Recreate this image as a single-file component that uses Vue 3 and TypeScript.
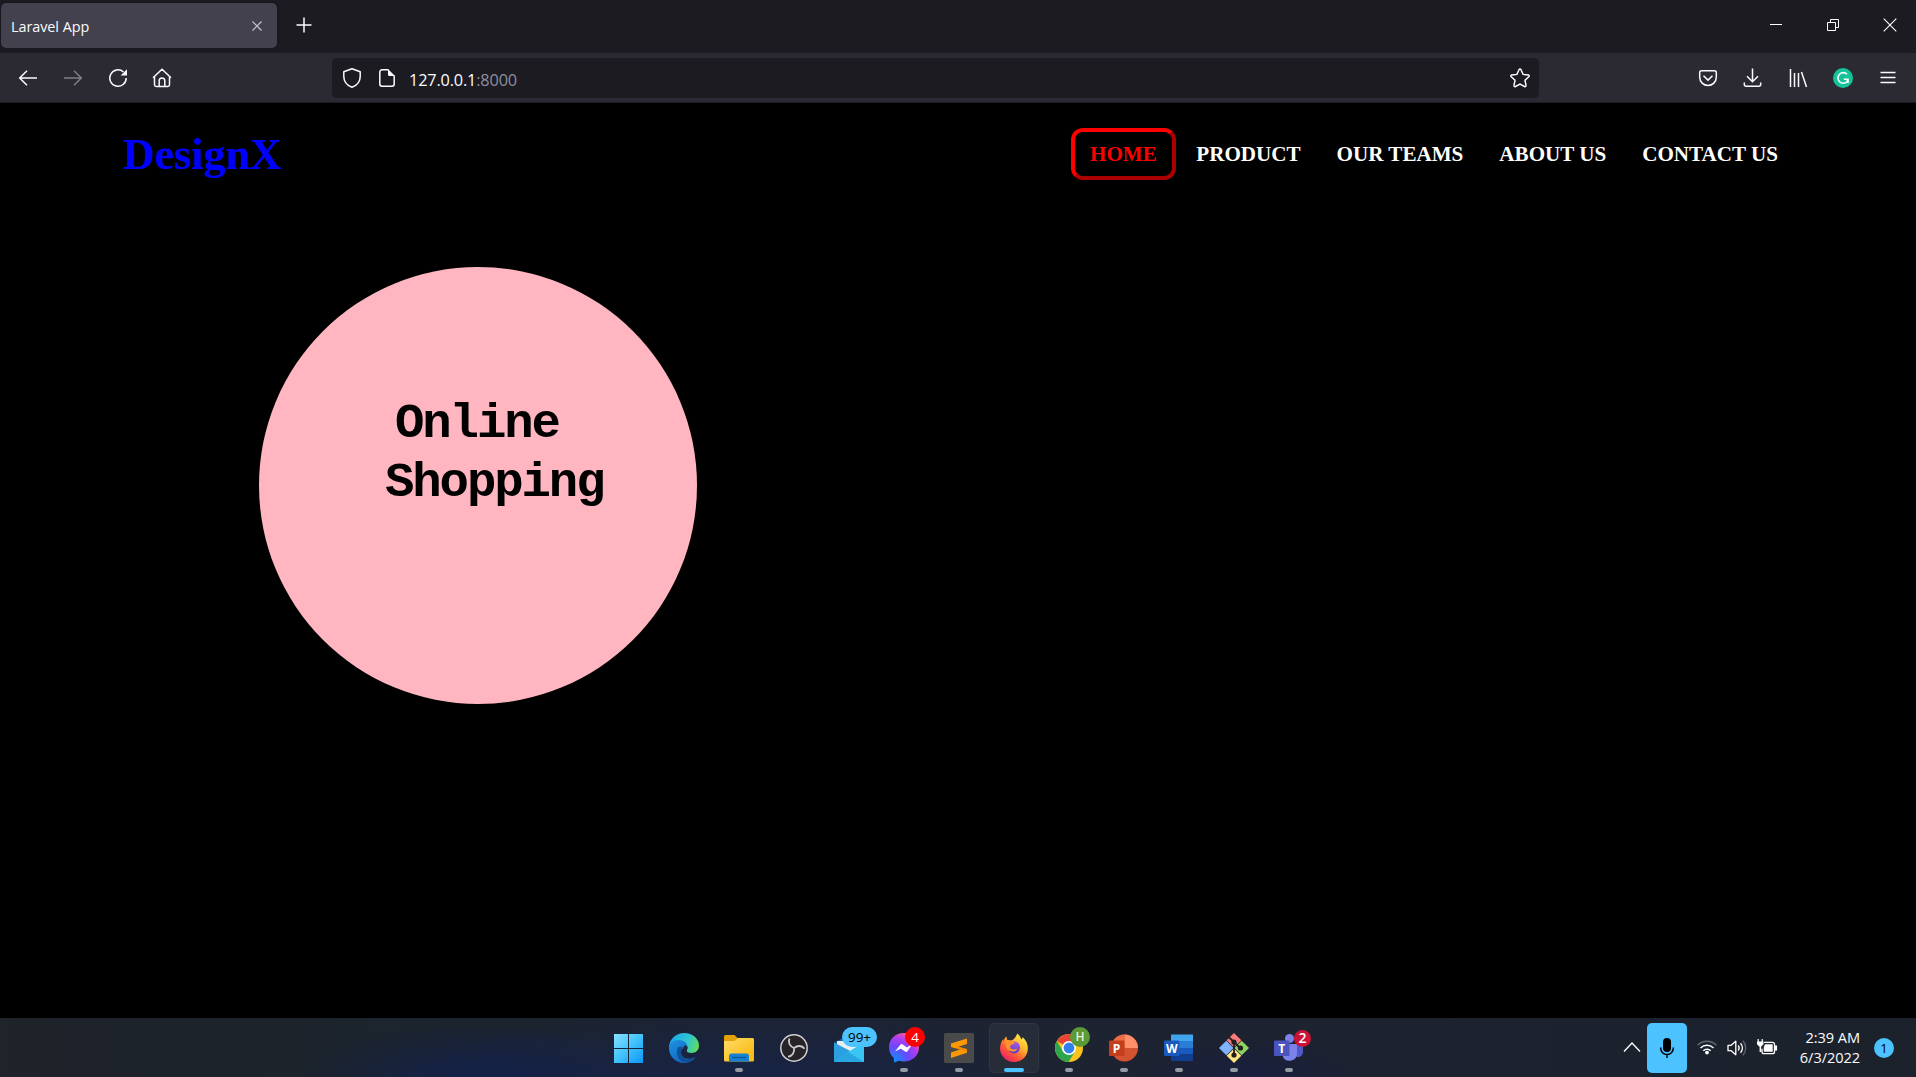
<script setup lang="ts">
interface NavItem { label: string; active?: boolean }
interface TaskApp { id: string; running?: boolean; active?: boolean; badge?: string; badgeKind?: string }

const nav: NavItem[] = [
  { label: 'HOME', active: true },
  { label: 'PRODUCT' },
  { label: 'OUR TEAMS' },
  { label: 'ABOUT US' },
  { label: 'CONTACT US' },
]

const apps: TaskApp[] = [
  { id: 'start' },
  { id: 'edge' },
  { id: 'files', running: true },
  { id: 'obs' },
  { id: 'mail', badge: '99+', badgeKind: 'pill' },
  { id: 'messenger', running: true, badge: '4', badgeKind: 'red' },
  { id: 'sublime', running: true },
  { id: 'firefox', active: true },
  { id: 'chrome', running: true, badge: 'H', badgeKind: 'green' },
  { id: 'powerpoint', running: true },
  { id: 'word', running: true },
  { id: 'git', running: true },
  { id: 'teams', running: true, badge: '2', badgeKind: 'crimson' },
]
</script>

<template>
  <div class="screen">
    <header class="tabbar">
      <div class="tab">
        <span class="tab-title">Laravel App</span>
        <svg class="tab-close" width="12" height="12" viewBox="0 0 12 12"><path d="M1.500 1.500l9 9M10.500 1.500l-9 9" stroke="#c9c8d0" stroke-width="1.200" fill="none" /></svg>
      </div>
      <svg class="new-tab" width="16" height="16" viewBox="0 0 16 16"><path d="M8 .5v15M.5 8h15" stroke="#fbfbfe" stroke-width="1.500" /></svg>
      <div class="window-controls">
        <svg width="14" height="14" viewBox="0 0 14 14"><path d="M1 6.500h12" stroke="#fff" /></svg>
        <svg width="14" height="14" viewBox="0 0 14 14" fill="none" stroke="#fff"><path d="M1.500 4.500h8v8h-8zM4.500 4.500v-3h8v8h-3" /></svg>
        <svg width="14" height="14" viewBox="0 0 14 14"><path d="M.7 .7l12.600 12.600M13.300 .7L.7 13.300" stroke="#fff" stroke-width="1.100" /></svg>
      </div>
    </header>

    <div class="toolbar">
      <div class="tools">
        <svg width="20" height="20" viewBox="0 0 20 20" class="ico"><path d="M19 10H2M9 2.700L1.700 10 9 17.300" /></svg>
        <svg width="20" height="20" viewBox="0 0 20 20" class="ico dim"><path d="M1 10h17M11 2.700l7.300 7.300-7.300 7.300" /></svg>
        <svg width="20" height="20" viewBox="0 0 20 20" class="ico"><path d="M18.200 10A8.200 8.200 0 1 1 15.500 4" /><path d="M19 1.200v6.300h-6.300z" fill="#fbfbfe" stroke="none" /></svg>
        <svg width="20" height="20" viewBox="0 0 20 20" class="ico home"><path d="M1 9.800L10 1.200l9 8.600M2.500 8.800v8a1.700 1.700 0 0 0 1.700 1.700h11.600a1.700 1.700 0 0 0 1.700-1.700v-8M7.200 18.300v-5.500a2.800 2.800 0 0 1 5.600 0v5.500" /></svg>
      </div>
      <div class="urlbar">
        <svg class="ico" width="20" height="22" viewBox="0 0 20 22"><path d="M10 1.800l8.200 3v4.700c0 5-3.600 9-8.200 10.800C5.400 18.500 1.800 14.500 1.800 9.500V4.800z" stroke-linejoin="round" /></svg>
        <svg class="ico page-ico" width="18" height="20" viewBox="0 0 18 20"><path d="M10.500 1.800H4A2.200 2.200 0 0 0 1.800 4v12A2.200 2.200 0 0 0 4 18.200h10a2.200 2.200 0 0 0 2.200-2.200V7.500" /><path d="M10 1l7 7h-5.500A1.500 1.500 0 0 1 10 6.500z" fill="#fbfbfe" stroke="none" /></svg>
        <span class="url">127.0.0.1<span class="port">:8000</span></span>
        <svg class="ico star" width="22" height="22" viewBox="0 0 22 22"><path d="M11 2c.5 0 .8.300 1 .7l2.100 4.700 5.100.6c1 .1 1.300 1.100.6 1.800L16 13.300l1 5.100c.2.900-.7 1.600-1.500 1.100L11 17l-4.500 2.500c-.8.500-1.700-.2-1.500-1.100l1-5.100-3.800-3.500c-.7-.7-.4-1.700.6-1.800l5.100-.6L10 2.700c.2-.4.500-.7 1-.7z" /></svg>
      </div>
      <div class="right-tools">
        <svg class="ico" width="20" height="20" viewBox="0 0 20 20"><path d="M3.500 2.800h13a1.800 1.800 0 0 1 1.800 1.800v4.700c0 4.600-3.700 8.200-8.300 8.200s-8.300-3.600-8.300-8.200V4.600a1.800 1.800 0 0 1 1.800-1.800zM5.500 7.800l4.500 4.300 4.500-4.300" /></svg>
        <svg class="ico" width="20" height="20" viewBox="0 0 20 20"><path d="M9.500 .5v13M4 8.300l5.500 5.500L15 8.300M1.300 14.500v1.800a2 2 0 0 0 2 2h12.400a2 2 0 0 0 2-2v-1.800" /></svg>
        <svg class="ico" width="20" height="20" viewBox="0 0 20 20"><path d="M2.500 1v18M6.500 5v14M10.500 5v14M13.500 4l5 15" /></svg>
        <svg width="20" height="20" viewBox="0 0 20 20"><circle cx="10" cy="10" r="10" fill="#15c39a" /><path d="M14 6.200A5.300 5.300 0 1 0 14 13.700l.6-1.800M10.800 11.200h4.200v3.800" fill="none" stroke="#fff" stroke-width="1.600" /></svg>
        <svg class="ico" width="20" height="20" viewBox="0 0 20 20"><path d="M2.500 4.500h15M2.500 9.500h15M2.500 14.500h15" /></svg>
      </div>
    </div>

    <main class="page">
      <div class="site-header">
        <h1 class="brand">DesignX</h1>
        <nav class="menu">
          <a v-for="item in nav" :key="item.label" :class="['link', { active: item.active }]">{{ item.label }}</a>
        </nav>
      </div>
      <section class="circle">
        <div class="headline first">Online</div>
        <div class="headline">Shopping</div>
      </section>
    </main>

    <footer class="taskbar">
      <div class="apps">
        <div v-for="app in apps" :key="app.id" :class="['app', { current: app.active }]">
          <svg v-if="app.id === 'start'" width="30" height="30" viewBox="0 0 30 30">
            <defs><linearGradient id="win" x1="0" y1="0" x2="30" y2="30" gradientUnits="userSpaceOnUse"><stop stop-color="#8be2ff" /><stop offset=".5" stop-color="#42c3fb" /><stop offset="1" stop-color="#0a94f7" /></linearGradient></defs>
            <path d="M0 1h14v14H0zM15 1h14v14H15zM0 16h14v14H0zM15 16h14v14H15z" fill="url(#win)" />
          </svg>
          <svg v-else-if="app.id === 'edge'" width="30" height="30" viewBox="0 0 30 30">
            <defs>
              <linearGradient id="eg" x1="2" y1="5" x2="30" y2="16" gradientUnits="userSpaceOnUse"><stop stop-color="#1ba9e8" /><stop offset=".55" stop-color="#2fc6d3" /><stop offset="1" stop-color="#65e04a" /></linearGradient>
              <linearGradient id="eb" x1="0" y1="10" x2="18" y2="30" gradientUnits="userSpaceOnUse"><stop stop-color="#1d8fe0" /><stop offset="1" stop-color="#0d61b8" /></linearGradient>
            </defs>
            <path d="M0 15C0 6.500 6.700 0 15.200 0 23.800 0 30 6 30 12.500c0 4.800-3.300 7.500-7.500 7.500-3.200 0-5-1.200-5-2.300 0-.8 1-1.500 1-3.200 0-3-3-5.500-7-5.500C6 9 1 11.500 0 15z" fill="url(#eg)" />
            <path d="M0 15c0-5 4.500-8 9.500-8 5 0 9 3 9 7.300 0 2-.8 2.600-.8 3.500-1.500-3-5.700-2.800-5.700 1.700 0 5 6.500 8.500 14.500 4.500-2.500 4-6.700 6-11.500 6C6.700 30 0 23.500 0 15z" fill="url(#eb)" />
            <path d="M9 14.500c-3 6 0 14 8 15.300 4-.4 7.500-2.700 9.500-5.800-8 4-14.500.5-14.500-4.500 0-2.500 1.300-4 3-4.300-2-1.800-4.500-2-6-.7z" fill="#124f96" />
            <path d="M16 12.300c2.500.5 3 2.500 1.700 5.500-.6 1.200.3 2.200 1.800 2.500-3 .5-5-1.500-5.200-4 0-2 .5-3.300 1.700-4z" fill="#1b2740" />
          </svg>
          <svg v-else-if="app.id === 'files'" width="30" height="30" viewBox="0 0 30 30">
            <defs><linearGradient id="fo" x1="0" y1="5" x2="20" y2="29" gradientUnits="userSpaceOnUse"><stop stop-color="#ffdc69" /><stop offset="1" stop-color="#f8bc15" /></linearGradient></defs>
            <path d="M0 3.500Q0 2 1.500 2h9l3.500 3.500h14.500Q30 5.500 30 7v8H0z" fill="#e3a008" /><path d="M0 8h10.500L14 5h15l1 1v21q0 1.500-1.500 1.500h-27Q0 28.500 0 27z" fill="url(#fo)" />
            <path d="M5 28.500V23a2.500 2.500 0 0 1 2.500-2.500h15A2.500 2.500 0 0 1 25 23v5.500z" fill="#1580d4" /><path d="M8 24.500h14" stroke="#0b559d" stroke-width="1.300" />
          </svg>
          <svg v-else-if="app.id === 'obs'" width="30" height="30" viewBox="0 0 30 30">
            <circle cx="15" cy="15" r="13.200" fill="#262427" stroke="#d2d0d2" stroke-width="1.500" />
            <g fill="none" stroke="#c9c7c9" stroke-width="1.800"><path d="M15 15c-4-1.500-6.500-5.500-4.500-9.500" /><path d="M15 15c3.300-2.700 8-2.900 10.500.8" /><path d="M15 15c.7 4.200-1.500 8.400-6 8.700" /></g>
          </svg>
          <svg v-else-if="app.id === 'mail'" width="30" height="30" viewBox="0 0 30 30">
            <path d="M0 10L15 1l15 9v19H0z" fill="#1264aa" /><path d="M3 8h24v12H3z" fill="#e9eef3" /><path d="M0 9.500l20 10.500L30 29H0z" fill="#2b9fe0" /><path d="M30 9.500V29H0L14 19z" fill="#39c5f2" /><path d="M14 19l16 10H0z" fill="#28a7e3" />
          </svg>
          <svg v-else-if="app.id === 'messenger'" width="30" height="30" viewBox="0 0 30 30">
            <defs><radialGradient id="ms" cx="5" cy="29" r="31" gradientUnits="userSpaceOnUse"><stop stop-color="#0695ff" /><stop offset=".5" stop-color="#6e47fb" /><stop offset=".8" stop-color="#b43cf0" /><stop offset="1" stop-color="#fa5e86" /></radialGradient></defs>
            <path d="M15 0C6.500 0 0 6 0 14.200 0 18.500 1.800 22.200 4.700 24.700L5 29.500l5.200-1.800c1.500.5 3.100.7 4.800.7 8.500 0 15-6 15-14.200S23.500 0 15 0z" fill="url(#ms)" /><path d="M6 18.500l5.500-7q1-.9 2.200 0l3.500 2.600q.7.400 1.400 0l5-3.300-5.400 7.600q-1 1-2.200.2L12.500 16q-.7-.4-1.300 0z" fill="#fff" />
          </svg>
          <svg v-else-if="app.id === 'sublime'" width="30" height="30" viewBox="0 0 30 30">
            <rect width="30" height="30" rx="1.500" fill="#4a4a4a" /><path d="M7 13l16 4v2.700L7 25v-5.500l9.500-3.300z" fill="#ff9800" /><path d="M7 10.500V14l16 4.700v-2.800L12.500 13z" fill="#f28c00" /><path d="M7 10.500l16-5V11l-12 3.800L7 13.700z" fill="#ff9800" />
          </svg>
          <svg v-else-if="app.id === 'firefox'" width="30" height="30" viewBox="0 0 30 30">
            <defs>
              <linearGradient id="ff" x1="25" y1="2" x2="5" y2="28" gradientUnits="userSpaceOnUse"><stop stop-color="#fff14c" /><stop offset=".35" stop-color="#ffb52e" /><stop offset=".65" stop-color="#ff5a36" /><stop offset="1" stop-color="#e9186c" /></linearGradient>
              <radialGradient id="fg" cx="17" cy="10" r="12" gradientUnits="userSpaceOnUse"><stop stop-color="#a259e8" /><stop offset="1" stop-color="#523bc3" /></radialGradient>
            </defs>
            <path d="M18.200.5c2.300 1.600 3.500 3.700 4 5.800 1-.2 1.400-1.300 1.200-2.300 3.300 2.800 5.600 6.500 5.400 12C28.500 23.500 22.800 29 15 29S1 23 1 15.500C1 12 2.500 8 4.200 6l.3 2.500C5 6 6 4.500 7.500 3.500L8.200 7l3.500.6C14 7.500 17.300 4 18.200.5z" fill="url(#ff)" />
            <circle cx="15" cy="14.500" r="6" fill="url(#fg)" /><path d="M4.500 8.500c3-1.500 5.500-1.700 7.700-.7l3.600 1.400c-.5 1.500-2 2.200-4.200 3.100-1.100 2.200.5 4.300 2.700 4.200 1.500 0 2.300-1 4-.8-1 2.500-3.200 3-5 2.800C7.800 17.800 6 14 7.500 11z" fill="#ff922b" />
          </svg>
          <svg v-else-if="app.id === 'chrome'" width="30" height="30" viewBox="0 0 30 30">
            <circle cx="15" cy="15" r="14" fill="#fcc31e" /><path d="M15 15L2.900 8A14 14 0 0 1 27.100 8z" fill="#ea4335" /><path d="M2.900 8A14 14 0 0 0 14.500 29L21 18.500 9 18.500z" fill="#2da44e" /><circle cx="15" cy="15" r="7" fill="#fff" /><circle cx="15" cy="15" r="5.400" fill="#2f80ed" />
          </svg>
          <svg v-else-if="app.id === 'powerpoint'" width="30" height="30" viewBox="0 0 30 30">
            <circle cx="15.500" cy="15" r="13.500" fill="#d35230" /><path d="M15.500 1.500A13.500 13.500 0 0 1 29 15H15.500z" fill="#ff8f6b" /><path d="M15.500 1.500A13.500 13.500 0 0 0 2 15h13.500z" fill="#ed6c47" /><rect y="7.500" width="15.500" height="15.500" rx="1.300" fill="#c43e1c" /><text x="7.600" y="19.500" class="letter">P</text>
          </svg>
          <svg v-else-if="app.id === 'word'" width="30" height="30" viewBox="0 0 30 30">
            <path d="M7 1.500h22v7H7z" fill="#41a5ee" /><path d="M7 8h22v7H7z" fill="#2b7cd3" /><path d="M7 15h22v6.500H7z" fill="#185abd" /><path d="M7 21.500h22v6.500H7z" fill="#103f91" /><rect y="7.500" width="15.500" height="15.500" rx="1.300" fill="#185abd" /><text x="7.700" y="19.500" class="letter">W</text>
          </svg>
          <svg v-else-if="app.id === 'git'" width="30" height="30" viewBox="0 0 30 30">
            <path d="M15 0l7.300 7.300L15 14.500 7.700 7.300z" fill="#ff7b7b" /><path d="M7.300 7.700l7.200 7.300-7.200 7.300L0 15z" fill="#80b3ff" /><path d="M22.700 7.700L30 15l-7.300 7.300-7.200-7.300z" fill="#8dd35f" /><path d="M15 15.500l7.300 7.200L15 30l-7.300-7.300z" fill="#ffe680" /><g stroke="#231f20" stroke-width="1.800" fill="#231f20"><path d="M9.500 4l5.500 5v13M15 9l6 6" fill="none" /><circle cx="15" cy="9" r="1.700" /><circle cx="15" cy="22" r="1.700" /><circle cx="21.500" cy="15" r="1.700" /></g>
          </svg>
          <svg v-else width="30" height="30" viewBox="0 0 30 30">
            <circle cx="15.500" cy="5.500" r="4.500" fill="#7b83eb" /><path d="M21 12h8v7a5 5 0 0 1-8 4z" fill="#5059c9" /><path d="M9 11h14v9a7.500 7.500 0 0 1-14 4z" fill="#7b83eb" /><rect y="7.500" width="15.500" height="15.500" rx="1.300" fill="#4b53bc" /><text x="7.700" y="19.500" class="letter">T</text>
          </svg>
          <span v-if="app.badge" :class="['badge', app.badgeKind]">{{ app.badge }}</span>
          <span v-if="app.running || app.active" :class="['indicator', { wide: app.active }]"></span>
        </div>
      </div>
      <div class="tray">
        <svg class="chevron" width="18" height="12" viewBox="0 0 18 12"><path d="M1 10.500L9 2l8 8.500" fill="none" stroke="#fff" stroke-width="1.300" /></svg>
        <div class="mic"><svg width="16" height="22" viewBox="0 0 16 22"><rect x="4" y="1" width="8" height="14" rx="4" /><path d="M1.700 10.500v.8a6.300 6.300 0 0 0 12.600 0v-.8M8 17.600V21" fill="none" stroke="#000" stroke-width="1.500" /></svg></div>
        <svg class="wifi" width="20" height="16" viewBox="0 0 20 16" fill="none" stroke="#fff" stroke-width="1.500"><path d="M.7 6.200a13.200 13.200 0 0 1 18.600 0" stroke="#626770" /><path d="M3.500 9a9.200 9.200 0 0 1 13 0M6.300 11.700a5.300 5.300 0 0 1 7.400 0" /><circle cx="10" cy="13.600" r="1.200" fill="#fff" /></svg>
        <svg class="volume" width="20" height="18" viewBox="0 0 20 18" fill="none" stroke="#fff" stroke-width="1.300"><path d="M1 6.300h3.200L8.800 2.200v13.600l-4.600-4.100H1z" stroke-linejoin="round" /><path d="M11.200 6.500a4 4 0 0 1 0 5M13.500 4.200a7 7 0 0 1 0 9.600" /><path d="M16 1.800a11 11 0 0 1 0 14.400" stroke="#626770" /></svg>
        <svg class="battery" width="21" height="18" viewBox="0 0 21 18"><path d="M7 4.300h8.500a2 2 0 0 1 2 2v7.400a2 2 0 0 1-2 2H7a2 2 0 0 1-2-2v-3" fill="none" stroke="#fff" stroke-width="1.300" /><path d="M8 6.300h7.700v7.500H6.800V9z" fill="#fff" /><path d="M18 8h1.500v4H18zM1.200 1v3M5.200 1v3" stroke="#fff" stroke-width="1.200" fill="#fff" /><path d="M0 3.500h6.500v2.800L4.300 8.500H2.200L0 6.300zM2.600 8h1.500v6H2.600z" fill="#fff" /></svg>
        <div class="clock"><span class="time">2:39 AM</span><span class="date">6/3/2022</span></div>
        <span class="count">1</span>
      </div>
    </footer>
  </div>
</template>

<style>
body { margin: 0; background: #000; overflow: hidden; }
</style>

<style scoped>
* { box-sizing: border-box; }
.screen { width: 1916px; height: 1077px; display: flex; flex-direction: column; background: #000; font-family: "Open Sans", "Noto Sans", sans-serif; color: #fbfbfe; white-space: nowrap; overflow: hidden; }
svg { display: block; flex: none; }
.ico { fill: none; stroke: #fbfbfe; stroke-width: 1.5; }
.dim { opacity: .4; }

.tabbar { height: 53px; flex: none; background: #1c1b22; display: flex; padding: 3px 0 5px 1px; }
.tab { width: 276px; height: 45px; border-radius: 5px; background: #42414d; display: flex; align-items: center; justify-content: space-between; padding: 0 14px 0 10px; box-shadow: 0 0 3px rgba(0, 0, 0, .4); }
.tab-title { font-size: 14.4px; padding-top: 2px; letter-spacing: -.05px; }
.new-tab { margin: 14px 0 0 19px; }
.window-controls { margin: 15px 19px 0 auto; display: flex; gap: 43px; }

.toolbar { height: 50px; flex: none; background: #2b2a33; display: flex; align-items: center; padding: 0 18px; border-bottom: 1px solid #1c1b22; }
.tools { display: flex; gap: 25px; width: 314px; }
.home { margin-left: -1px; }
.urlbar { width: 1207px; height: 40px; border-radius: 5px; background: #1c1b22; display: flex; align-items: center; padding: 0 8px 0 10px; }
.page-ico { margin-left: 16px; }
.url { margin-left: 13px; font-size: 16.3px; padding-top: 4px; letter-spacing: -.16px; }
.port { color: #8f8f9d; }
.star { margin-left: auto; }
.right-tools { display: flex; gap: 25px; margin-left: auto; }

.page { flex: 1; background: #000; font-family: "Liberation Serif", serif; }
.site-header { display: flex; justify-content: space-between; align-items: center; height: 102px; padding: 0 122px 0 123px; }
.brand { margin: 0; font-size: 44px; font-weight: 700; color: #00f; }
.menu { display: flex; gap: 4px; }
.link { font-size: 21.1px; font-weight: 700; color: #fff; line-height: 24px; padding: 14px 16px; }
.link.active { color: #f00; border: 4px outset #f00; border-radius: 12px; padding: 10px 15.5px 10px 15px; }
.circle { width: 438px; height: 437px; border-radius: 50%; background: #ffb6c1; margin: 62px 0 0 259px; padding: 128px 0 0 126px; }
.headline { font: 700 49px/59px "Liberation Mono", monospace; letter-spacing: -2.1px; color: #000; }
.first { padding-left: 10px; }

.taskbar { height: 59px; flex: none; display: flex; padding-left: 604px; background: radial-gradient(ellipse 180px 60px at 480px 65px, #13224d, transparent), radial-gradient(ellipse 330px 90px at 740px 75px, #16234a, transparent), radial-gradient(ellipse 120px 50px at 1250px 65px, #191e40, transparent), linear-gradient(90deg, #1f232a, #1c242d 20%, #1d2331 45%, #1c222c); }
.apps { display: flex; gap: 5px; padding-top: 5px; }
.app { position: relative; width: 50px; height: 50px; border-radius: 5px; display: flex; justify-content: center; padding-top: 10px; }
.app.current { background: #262c38; border: 1px solid #303541; padding-top: 9px; }
.indicator { position: absolute; bottom: 1px; left: 21px; width: 8px; height: 4px; border-radius: 2px; background: #969aa2; }
.indicator.wide { left: 14px; bottom: 0; width: 20px; background: #4cc2ff; }
.badge { position: absolute; height: 20px; line-height: 20px; border-radius: 10px; text-align: center; font-size: 13.5px; top: 4px; left: 26px; width: 20px; }
.pill { left: 18px; width: 35px; background: #4cc2ff; color: #000; }
.red { background: #f00; color: #fff; }
.green { background: #5b9a36; color: #e8f0df; left: 26px; font-weight: 600; font-size: 12px; }
.crimson { background: #cb1237; color: #fff; top: 7px; left: 30px; width: 17px; height: 17px; line-height: 16px; font-weight: 600; font-size: 14px; }
.letter { font: 700 12px "Open Sans", sans-serif; fill: #fff; text-anchor: middle; }

.tray { margin-left: auto; display: flex; padding-right: 22px; }
.chevron { margin: 23px 6px 0 0; }
.mic { width: 40px; height: 50px; margin-top: 5px; border-radius: 5px; background: #4cc2ff; display: flex; align-items: center; justify-content: center; }
.wifi { margin: 21px 0 0 10px; }
.volume { margin: 21px 0 0 10px; }
.battery { margin: 20px 0 0 10px; }
.clock { width: 82px; margin: 9px 14px 0 0; display: flex; flex-direction: column; align-items: flex-end; font-size: 14.6px; line-height: 20px; letter-spacing: -.08px; }
.count { width: 20px; height: 20px; margin-top: 20px; border-radius: 50%; background: #4cc2ff; color: #000; font-size: 13px; line-height: 21px; text-align: center; }
</style>
